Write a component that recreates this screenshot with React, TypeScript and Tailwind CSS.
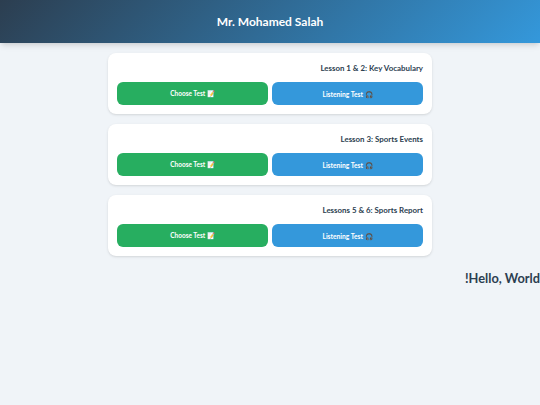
const lessons = ["Lesson 1 & 2: Key Vocabulary", "Lesson 3: Sports Events", "Lessons 5 & 6: Sports Report"];

export default function App() {
  return (
    <div className="min-h-[405px] overflow-hidden bg-[#f0f4f8] font-['Lato','Noto_Sans',sans-serif] text-[#2c3e50]">
      <header className="flex h-[43px] items-center justify-center bg-[linear-gradient(135deg,#2c3e50,#3498db)] text-[12px] font-bold text-white shadow-md">
        Mr. Mohamed Salah
      </header>
      <main className="mx-auto mt-[10px] flex w-[324px] flex-col gap-[10px]">
        {lessons.map((lesson) => (
          <section key={lesson} className="rounded-lg bg-white p-[9px] shadow-sm">
            <h2 className="flex h-[20.15px] items-center justify-end pb-[7px] text-[7.9px] font-bold">{lesson}</h2>
            <div className="grid grid-cols-2 gap-1">
              <button className="h-[23px] rounded-md bg-[#27ae60] text-[6.5px] font-bold text-white">Choose Test 📝</button>
              <button className="h-[23px] rounded-md bg-[#3498db] text-[6.7px] font-bold text-white">Listening Test 🎧</button>
            </div>
          </section>
        ))}
      </main>
      <p className="mt-[13px] pl-[465px] text-[12.8px] font-bold whitespace-nowrap">!Hello, World</p>
    </div>
  );
}
